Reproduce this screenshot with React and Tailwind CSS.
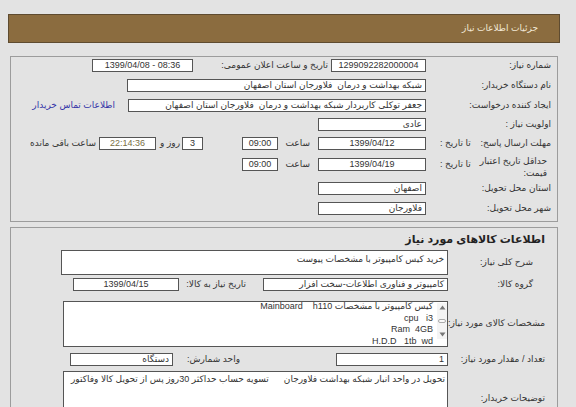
import React from "react";

const box = "h-[13px] border border-[#555] bg-white px-[3px] leading-[11px] whitespace-pre overflow-hidden shrink-0";

function Field({ className = "", children, ...rest }) {
  return (
    <div className={`${box} ${className}`} {...rest}>
      {children}
    </div>
  );
}

function Label({ className = "", children }) {
  return <div className={`shrink-0 whitespace-nowrap ${className}`}>{children}</div>;
}

function Arrow({ up }) {
  return (
    <svg width="7" height="5" viewBox="0 0 7 5">
      <path d={up ? "M0.5 4.5 L3.5 0.5 L6.5 4.5 Z" : "M0.5 0.5 L3.5 4.5 L6.5 0.5 Z"} fill="#777" />
    </svg>
  );
}

export default function App() {
  return (
    <div
      dir="rtl"
      className="w-[576px] h-[407px] overflow-hidden bg-[#e3e3e3] pt-[14px] text-[9px] text-[#333] font-['Liberation_Sans','DejaVu_Sans',sans-serif]"
    >
      {/* header bar */}
      <div className="mr-[16px] w-[552px] h-[29px] bg-[#8b6c3f] border border-[#5e4b30] flex items-center pr-[21px] text-[9px] text-[#f1e8d6]">
        جزئیات اطلاعات نیاز
      </div>

      {/* panel 1 */}
      <div className="mr-[18px] mt-[13px] w-[548px] h-[166px] border border-[#9c9c9c] pr-[6px]">
        <div className="mt-[2px] flex items-center h-[13px]">
          <Label className="w-[125px]">شماره نیاز:</Label>
          <Field className="w-[95px] text-center">1299092282000004</Field>
          <Label className="w-[138px] pr-[3px]">تاریخ و ساعت اعلان عمومی:</Label>
          <Field dir="ltr" className="w-[101px] text-center">1399/04/08 - 08:36</Field>
        </div>

        <div className="mt-[7px] flex items-center h-[13px]">
          <Label className="w-[125px]">نام دستگاه خریدار:</Label>
          <Field className="w-[299px]">شبکه بهداشت و درمان  فلاورجان استان اصفهان</Field>
        </div>

        <div className="mt-[7px] flex items-center h-[13px]">
          <Label className="w-[125px]">ایجاد کننده درخواست:</Label>
          <Field className="w-[298px]">جعفر توکلی کاربردار شبکه بهداشت و درمان  فلاورجان استان اصفهان</Field>
          <Label className="mr-[13px] text-[#3434a8]">اطلاعات تماس خریدار</Label>
        </div>

        <div className="mt-[6px] flex items-center h-[13px]">
          <Label className="w-[125px]">اولویت نیاز :</Label>
          <Field className="w-[108px]">عادی</Field>
        </div>

        <div className="mt-[6px] flex items-center h-[13px]">
          <div className="w-[125px] shrink-0 flex justify-between pl-[14px] whitespace-nowrap">
            <span>مهلت ارسال پاسخ:</span>
            <span>تا تاریخ :</span>
          </div>
          <Field className="w-[108px] text-center">1399/04/12</Field>
          <Label className="w-[40px] pr-[8px]">ساعت</Label>
          <Field className="w-[36px] text-center">09:00</Field>
          <Field className="mr-[39px] w-[21px] text-center">3</Field>
          <Label className="mr-[2px] w-[22px]">روز و</Label>
          <Field className="mr-[2px] w-[57px] text-center bg-[#f3efc6] text-[#7a6f45] border-[#8a8a70]">22:14:36</Field>
          <Label className="mr-[3px]">ساعت باقی مانده</Label>
        </div>

        <div className="mt-[8px] flex items-center h-[13px]">
          <div className="w-[125px] shrink-0 flex justify-between items-center pl-[14px] pr-[4px] whitespace-nowrap">
            <span className="leading-[12px] mt-[4px]">
              حداقل تاریخ اعتبار
              <br />
              قیمت:
            </span>
            <span>تا تاریخ :</span>
          </div>
          <Field className="w-[108px] text-center">1399/04/19</Field>
          <Label className="w-[40px] pr-[8px]">ساعت</Label>
          <Field className="w-[36px] text-center">09:00</Field>
        </div>

        <div className="mt-[11px] flex items-center h-[13px]">
          <Label className="w-[125px]">استان محل تحویل:</Label>
          <Field className="w-[108px]">اصفهان</Field>
        </div>

        <div className="mt-[7px] flex items-center h-[13px]">
          <Label className="w-[125px]">شهر محل تحویل:</Label>
          <Field className="w-[108px]">فلاورجان</Field>
        </div>
      </div>

      {/* panel 2 */}
      <div className="mr-[18px] mt-[5px] w-[548px] h-[200px] border border-[#9c9c9c] pr-[12px]">
        <div className="mt-[5px] h-[12px] leading-[12px] font-bold text-[11px] text-[#222]">
          اطلاعات کالاهای مورد نیاز
        </div>

        <div className="mt-[5px] flex items-center">
          <Label className="w-[97px] pr-[12px]">شرح کلی نیاز:</Label>
          <div className="w-[387px] h-[25px] border border-[#555] bg-white px-[3px] pt-[2px] leading-[12px] shrink-0">
            خرید کیس کامپیوتر با مشخصات پیوست
          </div>
        </div>

        <div className="mt-[3px] flex items-center h-[13px]">
          <Label className="w-[97px] pr-[12px]">گروه کالا:</Label>
          <Field className="w-[185px]">کامپیوتر و فناوری اطلاعات-سخت افزار</Field>
          <Label className="w-[84px] pr-[17px]">تاریخ نیاز به کالا:</Label>
          <Field className="w-[106px] text-center">1399/04/15</Field>
        </div>

        <div className="mt-[10px] flex items-center">
          <Label className="w-[97px]">مشخصات کالای مورد نیاز:</Label>
          <div className="w-[385px] h-[46px] border border-[#555] bg-white flex items-start shrink-0">
            <div className="w-[10px] h-[36px] mt-[1px] bg-[#f4f4f4] flex flex-col items-center justify-between py-[2px] shrink-0">
              <Arrow up />
              <div className="w-[8px] h-[4px] border border-[#aaa] rounded-[2px] bg-[#fafafa]" />
              <Arrow />
            </div>
            <div className="mr-[4px] -mt-[1px] leading-[11.5px] whitespace-pre">
              <div>{"کیس کامپیوتر با مشخصات h110\u200F    Mainboard"}</div>
              <div>{"\u200Fcpu   i3"}</div>
              <div>{"\u200FRam  4GB"}</div>
              <div>{"\u200FH.D.D   1tb  wd"}</div>
            </div>
          </div>
        </div>

        <div className="mt-[6px] flex items-center h-[13px]">
          <Label className="w-[97px]">تعداد / مقدار مورد نیاز:</Label>
          <Field className="w-[112px]">1</Field>
          <Label className="mr-[96px] w-[67px]">واحد شمارش:</Label>
          <Field className="w-[103px]">دستگاه</Field>
        </div>

        <div className="mt-[5px] flex items-start">
          <Label className="w-[97px] mt-[21px]">توضیحات خریدار:</Label>
          <div className="w-[385px] h-[60px] border border-[#555] bg-white px-[2px] pt-[1px] leading-[12px] whitespace-pre overflow-hidden shrink-0">
            تحویل در واحد انبار شبکه بهداشت فلاورجان      تسویه حساب حداکثر 30روز پس از تحویل کالا وفاکتور
          </div>
        </div>
      </div>
    </div>
  );
}
